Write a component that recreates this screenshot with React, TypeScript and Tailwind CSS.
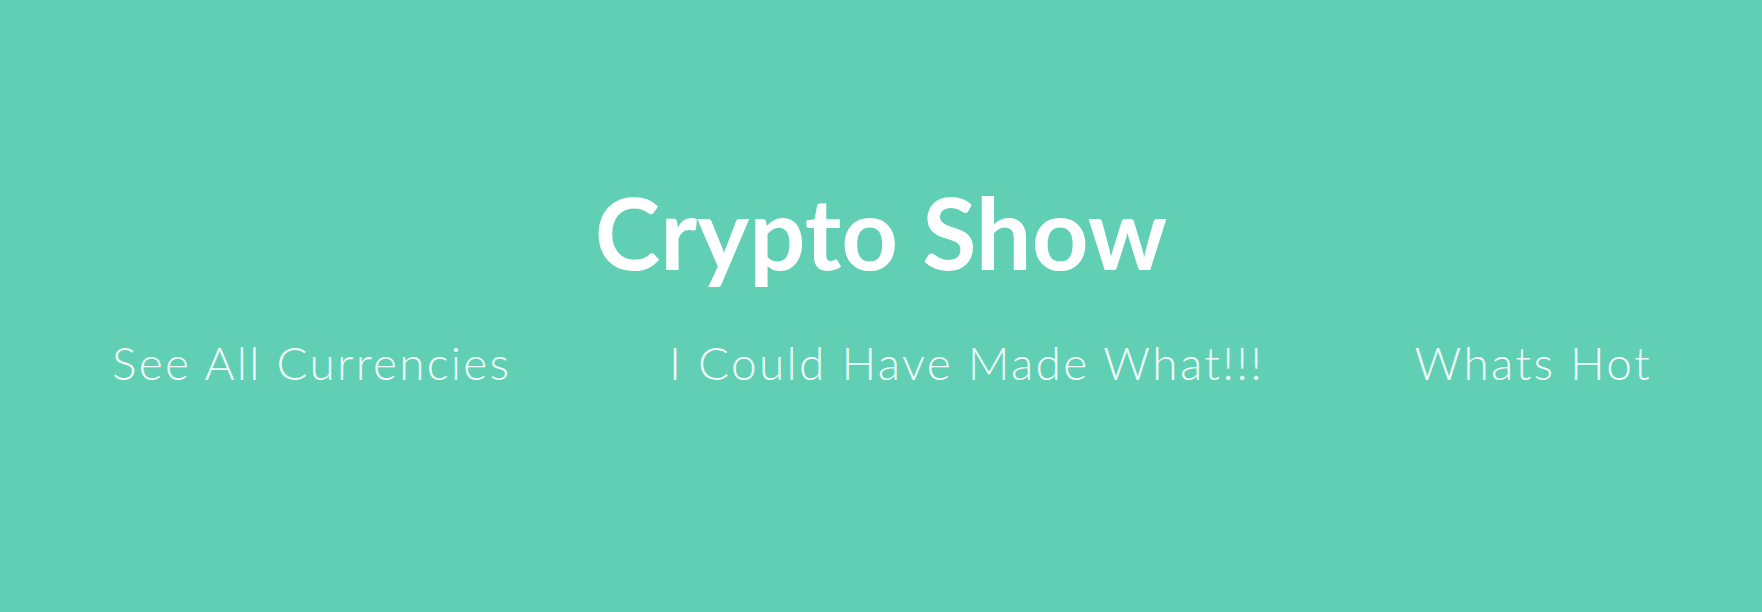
export default function App() {
  return (
    <main className="min-h-[612px] w-full bg-[#60cfb4] pt-[182px] font-['Lato',sans-serif]">
      <h1 className="text-center text-[99px] leading-none font-bold text-white">Crypto Show</h1>

      <nav className="mt-[59px] grid grid-cols-[557px_1fr_auto] pl-[112px] pr-[110px] text-[46px] leading-none font-light tracking-[2.3px] text-[#f2fbf8]">
        <a href="#">See All Currencies</a>
        <a href="#">I Could Have Made What!!!</a>
        <a href="#">Whats Hot</a>
      </nav>
    </main>
  )
}
